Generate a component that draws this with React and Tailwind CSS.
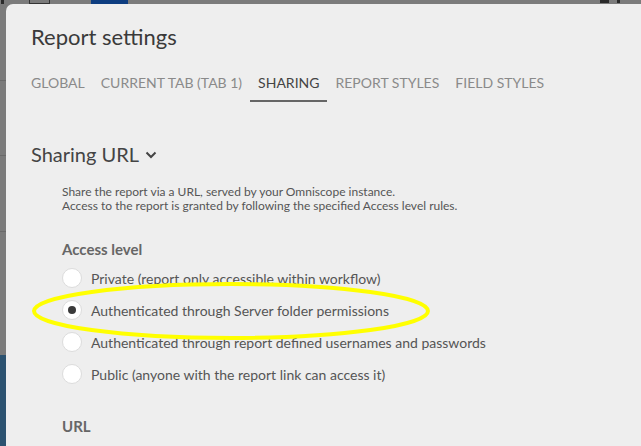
import React from 'react';

const tabs = ['Global', 'Current tab (Tab 1)', 'Sharing', 'Report styles', 'Field styles'];

const levels = [
  'Private (report only accessible within workflow)',
  'Authenticated through Server folder permissions',
  'Authenticated through report defined usernames and passwords',
  'Public (anyone with the report link can access it)',
];

function Radio({ checked }) {
  return (
    <span className="flex h-5 w-5 shrink-0 items-center justify-center rounded-full border border-[#dcdcdc] bg-white">
      {checked && <span className="h-2 w-2 rounded-full bg-[#3a3a3a]" />}
    </span>
  );
}

export default function App() {
  return (
    <div
      className="relative h-[446px] w-[641px] overflow-hidden bg-[#7b7b7b]"
      style={{ fontFamily: 'Lato, "Open Sans", sans-serif' }}
    >
      {/* page behind the backdrop */}
      <div className="flex h-[4px] items-start">
        <span className="ml-[1px] h-[4px] w-[3px] bg-[#2a2a2a]" />
        <span className="ml-[25px] h-[4px] w-[21px] border-x border-b border-[#333]" />
        <span className="ml-[41px] h-[4px] w-[37px] bg-[#0d3d80]" />
        <span className="ml-[472px] h-[3px] w-[9px] bg-[#2a2a2a]" />
        <span className="ml-[8px] h-[3px] w-[3px] bg-[#2a2a2a]" />
      </div>
      <div className="flex h-[442px] w-[6px] flex-col">
        <div className="h-[77px] border-b border-[#6a6a6a]" />
        <div className="h-[75px] border-b border-[#6a6a6a]" />
        <div className="h-[76px] border-b border-[#6a6a6a]" />
        <div className="h-[123px]" />
        <div className="flex-1 bg-[#2c5270]" />
      </div>

      {/* dialog */}
      <div className="absolute left-[6px] top-[4px] h-[470px] w-[660px] rounded-[7px] bg-[#eeeeee] pl-[25px] pt-[19px]">
        <h1 className="text-[22px] leading-[28px] text-[#3a3a3a]">Report settings</h1>

        <nav className="-ml-2 mt-[22px] flex">
          {tabs.map((t) => (
            <div
              key={t}
              className={
                t === 'Sharing'
                  ? 'border-b-2 border-[#666] px-2 pb-[7px] text-[14px] uppercase leading-[20px] text-[#444]'
                  : 'border-b-2 border-transparent px-2 pb-[7px] text-[14px] uppercase leading-[20px] text-[#8a8a8a]'
              }
            >
              {t}
            </div>
          ))}
        </nav>

        <div className="mt-[39px] flex items-center gap-[6px]">
          <h2 className="text-[20px] leading-[26px] text-[#444]">Sharing URL</h2>
          <svg width="12" height="8" viewBox="0 0 12 8" className="mt-[1px]">
            <path d="M1.5 1.5 L6 6 L10.5 1.5" fill="none" stroke="#444" strokeWidth="2" />
          </svg>
        </div>

        <div className="ml-[31px] flex flex-col">
          <div className="mt-[18px] text-[12px] leading-[14px] text-[#555]">
            <p>Share the report via a URL, served by your Omniscope instance.</p>
            <p>Access to the report is granted by following the specified Access level rules.</p>
          </div>

          <h3 className="mt-[26px] text-[15px] font-bold leading-[20px] text-[#666]">Access level</h3>

          <div className="mt-[9px] flex flex-col gap-[12px]">
            {levels.map((l, i) => (
              <label key={l} className="flex h-5 items-center gap-[9px] text-[14px] text-[#555]">
                <Radio checked={i === 1} />
                <span>{l}</span>
              </label>
            ))}
          </div>

          <h3 className="mt-[32px] text-[15px] font-bold leading-[20px] text-[#666]">URL</h3>
        </div>
      </div>

      {/* highlight annotation */}
      <svg className="pointer-events-none absolute left-0 top-0" width="641" height="446">
        <ellipse cx="231" cy="311" rx="197" ry="27" fill="none" stroke="#ffff00" strokeWidth="4" />
      </svg>
    </div>
  );
}
